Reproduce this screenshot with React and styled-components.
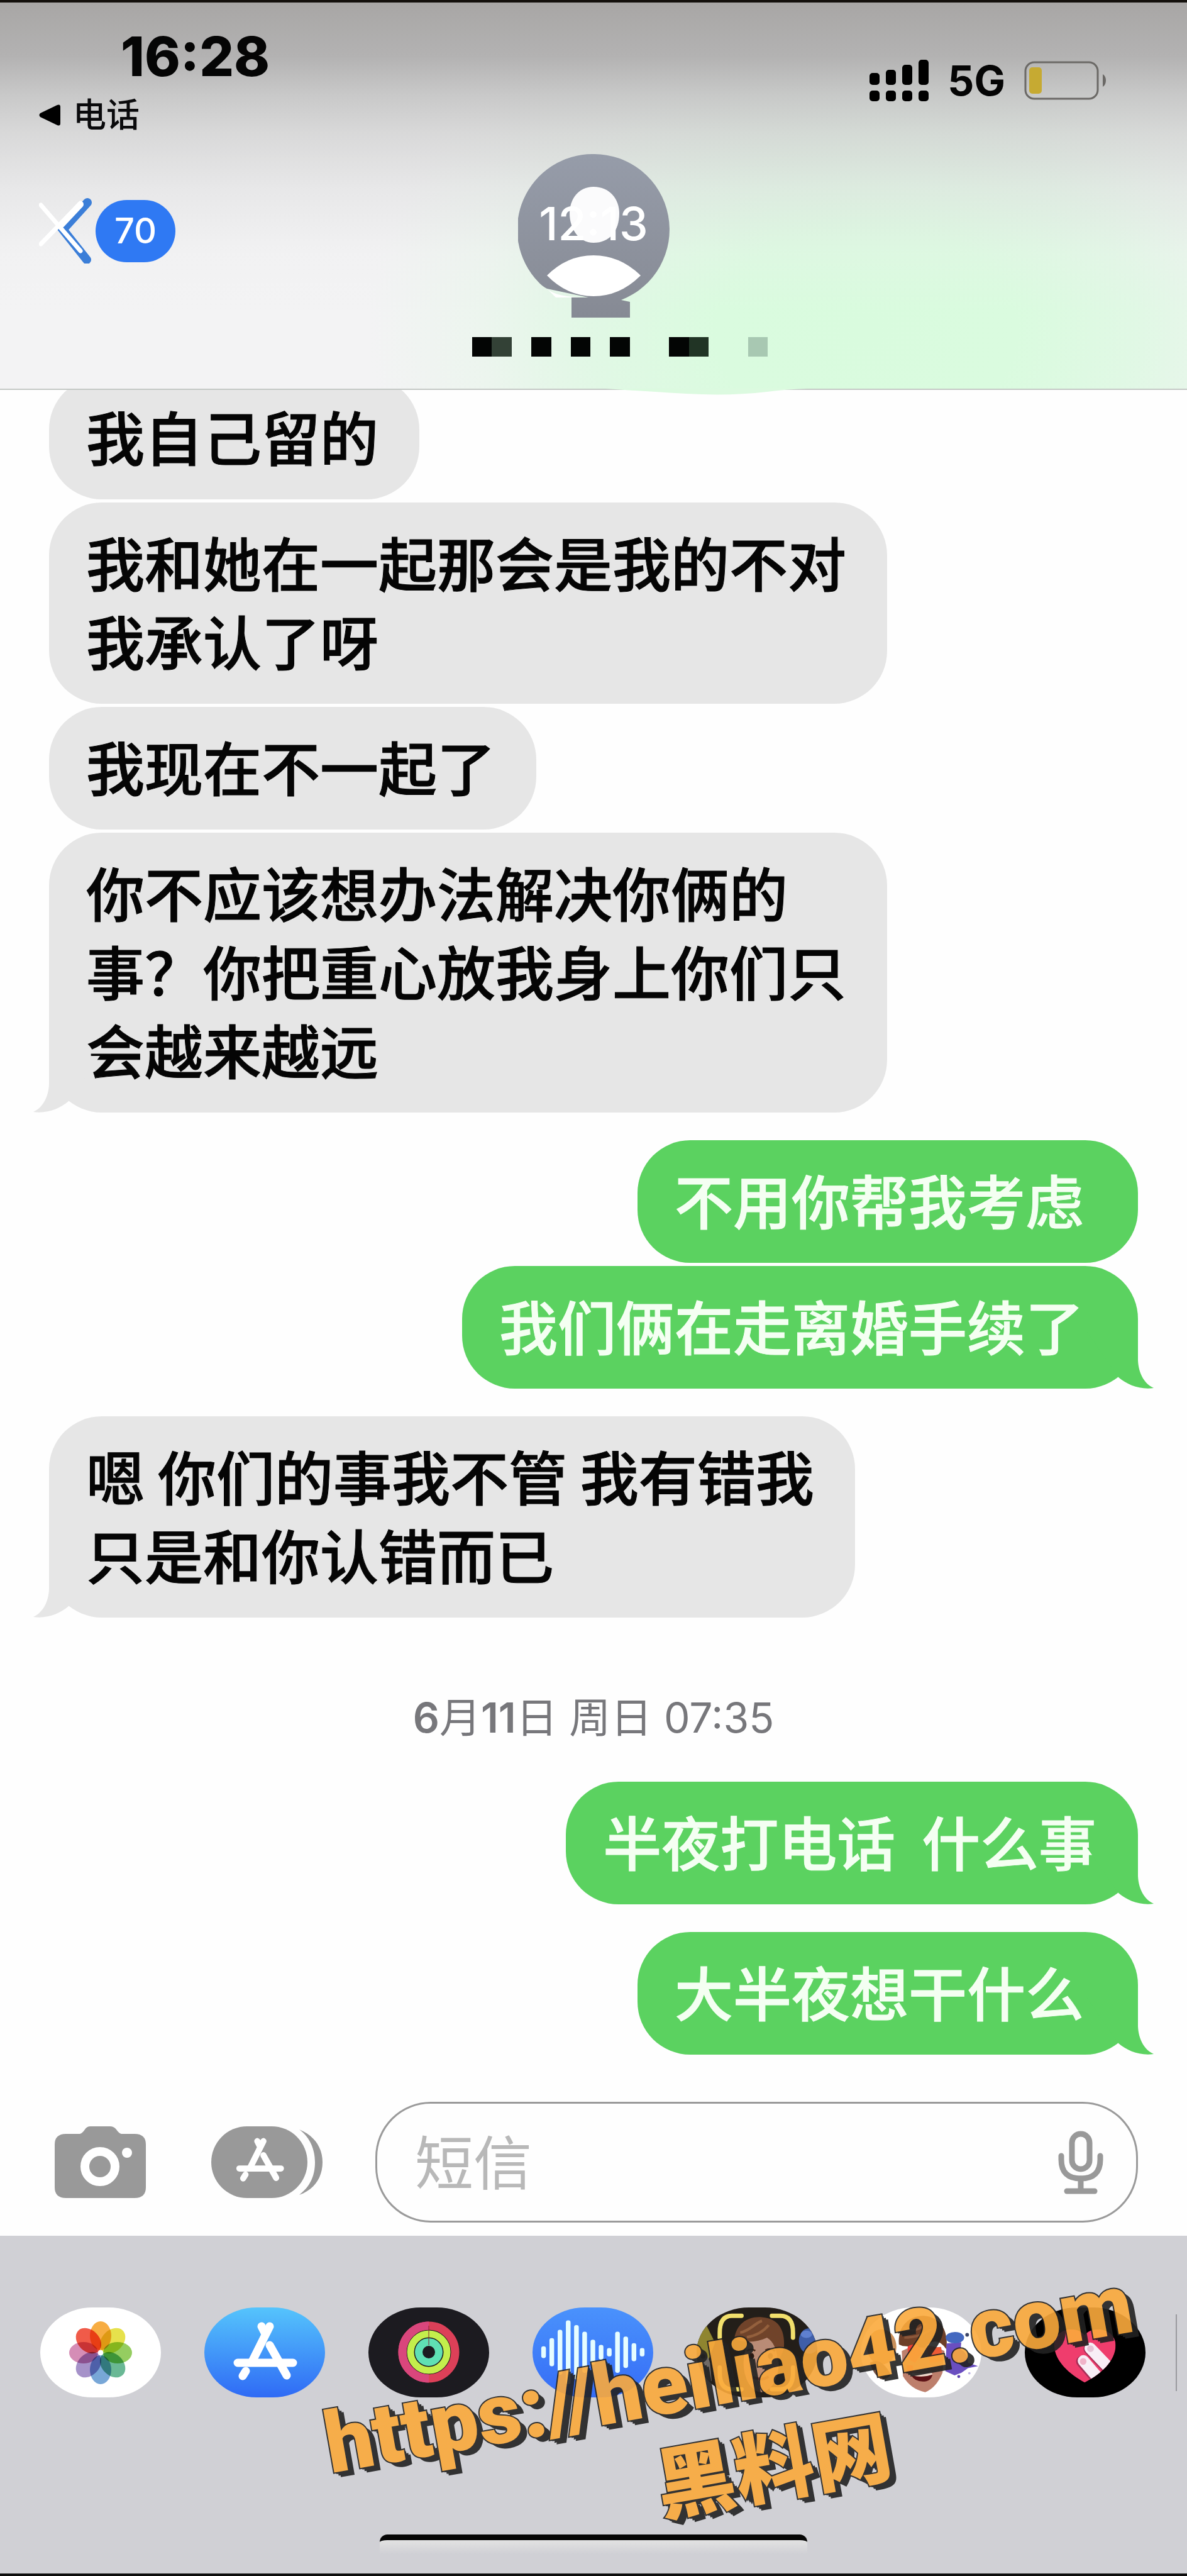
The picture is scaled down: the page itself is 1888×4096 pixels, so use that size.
import React from "react";
import styled, { createGlobalStyle } from "styled-components";

const groups = [
  {
    side: "in",
    messages: [
      "我自己留的",
      "我和她在一起那会是我的不对\n我承认了呀",
      "我现在不一起了",
      "你不应该想办法解决你俩的\n事？你把重心放我身上你们只\n会越来越远",
    ],
  },
  { side: "out", messages: ["不用你帮我考虑 ", "我们俩在走离婚手续了 "] },
  { side: "in", messages: ["嗯 你们的事我不管 我有错我\n只是和你认错而已"] },
];

const lateGroups = [
  { side: "out", messages: ["半夜打电话  什么事"] },
  { side: "out", messages: ["大半夜想干什么 "] },
];

const petals = [
  "#f6a229",
  "#e3dd33",
  "#86c64a",
  "#55ae86",
  "#659bd2",
  "#9a83c2",
  "#cf7dac",
  "#ee4430",
];

const waveBars = [35, 84, 134, 190, 162, 123, 75, 44, 25, 123, 94, 54, 25];

const Group = ({ side, messages }) => (
  <MessageGroup>
    {messages.map((text, index) => (
      <Bubble key={text} $side={side}>
        {text}
        {index === messages.length - 1 && (
          <Tail $side={side} viewBox="0 0 106 90" aria-hidden="true">
            <path d="M81 0V45C82 66 91 82 106 89C84 92 64 84 50 72L0 0Z" />
          </Tail>
        )}
      </Bubble>
    ))}
  </MessageGroup>
);

const StoreGlyph = () => (
  <g fill="none" stroke="#fff" strokeWidth="13" strokeLinecap="round">
    <path d="M104 30L76 86M66 101L61 109" />
    <path d="M91 30L97 42M104 60L131 108" />
    <path d="M53 88H141" />
  </g>
);

const PhotosIcon = () => (
  <svg viewBox="0 0 192 143">
    {petals.map((color, index) => (
      <ellipse
        key={color}
        cx="96"
        cy="45"
        rx="17"
        ry="23"
        fill={color}
        opacity="0.88"
        transform={`rotate(${index * 45} 96 72)`}
        style={{ mixBlendMode: "multiply" }}
      />
    ))}
    <circle cx="96" cy="72" r="4" fill="#fff" />
  </svg>
);

const StoreIcon = () => (
  <svg viewBox="0 0 192 143">
    <StoreGlyph />
  </svg>
);

const FitnessIcon = () => (
  <svg viewBox="0 0 192 143" fill="none">
    <circle cx="96" cy="71" r="42" stroke="#dc4058" strokeWidth="13" />
    <path d="M96 29A42 42 0 0 0 96 113" stroke="#d9467c" strokeWidth="13" />
    <circle cx="96" cy="71" r="29" stroke="#c3ee4c" strokeWidth="11" />
    <circle cx="96" cy="71" r="16" stroke="#5fe0b4" strokeWidth="12" />
    <path d="M96 29V49M96 49V60" stroke="#8a2230" strokeWidth="2" opacity="0.5" />
  </svg>
);

const AudioIcon = () => (
  <svg viewBox="0 0 720 538">
    {waveBars.map((half, index) => (
      <rect
        key={index}
        x={52 + index * 49}
        y={267 - half}
        width="28"
        height={half * 2}
        rx="13"
        fill="#e6fdff"
      />
    ))}
  </svg>
);

const MemojiCameraIcon = () => (
  <svg viewBox="0 0 720 538">
    <path d="M0 110H60L110 210L60 340H0Z" fill="#8f8530" />
    <path d="M0 270Q60 250 80 330L90 440L0 420Z" fill="#6f6a66" />
    <circle cx="38" cy="292" r="14" fill="#1c1a19" />
    <ellipse cx="672" cy="200" rx="62" ry="76" fill="#3f5ea8" />
    <ellipse cx="655" cy="160" rx="34" ry="22" fill="#5f80cf" />
    <ellipse cx="385" cy="330" rx="105" ry="175" fill="#b98b76" />
    <path d="M225 190C235 95 310 50 390 58C500 66 530 150 520 250L485 330C480 250 460 205 420 180C360 210 290 210 225 190Z" fill="#70432a" />
    <path d="M260 150C320 140 350 90 390 80M300 178C370 165 410 130 430 105" stroke="#94603d" strokeWidth="16" fill="none" />
    <path d="M300 260Q325 240 350 258M410 256Q440 238 468 260" stroke="#4a2818" strokeWidth="10" fill="none" />
    <ellipse cx="328" cy="290" rx="15" ry="18" fill="#2a1a14" />
    <ellipse cx="440" cy="290" rx="15" ry="18" fill="#2a1a14" />
    <path d="M335 415Q385 440 430 412" stroke="#7a2e2c" strokeWidth="16" fill="none" />
    <g fill="none" stroke="#f2df6c" strokeWidth="26" strokeLinecap="round">
      <path d="M138 180V150Q138 50 210 50H268" />
      <path d="M449 50H500Q575 50 575 150V180" />
      <path d="M138 358V388Q138 488 210 488H268" />
      <path d="M449 488H500Q575 488 575 388V358" />
    </g>
  </svg>
);

const MemojiIcon = () => (
  <svg viewBox="0 0 720 538">
    <ellipse cx="125" cy="235" rx="88" ry="105" fill="#c98f5a" />
    <path d="M55 330Q120 290 180 400Q160 430 120 428Q75 400 55 330Z" fill="#73503f" />
    <path d="M245 260Q370 190 500 260L488 390Q450 480 385 505Q300 490 252 410Z" fill="#bd7f6c" />
    <path d="M228 220C220 110 290 50 375 50C470 55 525 130 512 250Q450 160 380 240L250 230Z" fill="#6d3f28" />
    <path d="M250 120Q330 160 390 95M260 180Q350 180 420 130" stroke="#8c573a" strokeWidth="14" fill="none" />
    <path d="M280 235Q300 215 340 225L365 270L325 330L285 310Z" fill="#ee3f35" />
    <path d="M395 240L480 235L490 320L410 330Z" fill="#ee5a35" />
    <path d="M275 345H312V385H275Z" fill="#e8352e" />
    <path d="M302 405Q370 420 428 400Q420 442 370 442Q320 440 302 405Z" fill="#5c1115" />
    <path d="M302 405Q370 420 428 400L422 385Q365 400 308 390Z" fill="#f0d8cc" />
    <path d="M512 215L600 208L596 250Q640 270 640 330L700 350L640 362L600 390L560 405L505 380Z" fill="#6a4ec0" />
    <ellipse cx="562" cy="180" rx="55" ry="34" fill="#4468c0" />
    <circle cx="635" cy="163" r="11" fill="#3d4668" />
    <circle cx="585" cy="412" r="9" fill="#5d42b0" />
    <circle cx="648" cy="392" r="7" fill="#b9aee2" />
  </svg>
);

const HeartIcon = () => (
  <svg viewBox="0 0 720 538">
    <defs>
      <clipPath id="heart">
        <path d="M357 447C270 400 176 320 176 225C176 130 300 100 357 165C410 100 542 130 542 225C542 320 450 400 357 447Z" />
      </clipPath>
    </defs>
    <g clipPath="url(#heart)">
      <rect width="720" height="538" fill="#ef3d6d" />
      <g strokeWidth="68" strokeLinecap="round">
        <path d="M340 322L450 450" stroke="#a82f58" />
        <path d="M384 247L520 390" stroke="#a82f58" />
        <path d="M350 318L480 470" stroke="#f8eef6" />
        <path d="M390 243L540 400" stroke="#f8eef6" />
      </g>
      <circle cx="348" cy="322" r="20" fill="#f0b3c9" />
      <circle cx="392" cy="246" r="20" fill="#e5c4d6" />
    </g>
  </svg>
);

const apps = [
  { name: "照片", icon: <PhotosIcon />, background: "#fff" },
  {
    name: "App Store",
    icon: <StoreIcon />,
    background: "linear-gradient(#55c4fc, #2f6af5)",
  },
  { name: "健身", icon: <FitnessIcon />, background: "#1c1b20" },
  {
    name: "音频",
    icon: <AudioIcon />,
    background: "linear-gradient(#4a92fc, #356cf6)",
  },
  { name: "相机拟我表情", icon: <MemojiCameraIcon />, background: "#231e19" },
  { name: "拟我表情", icon: <MemojiIcon />, background: "#fff" },
  { name: "Digital Touch", icon: <HeartIcon />, background: "#000" },
];

const App = () => {
  return (
    <Page>
      <GlobalStyle />
      <Header>
        <StatusBar>
          <div>
            <Time>16:28</Time>
            <ReturnLink href="#phone">
              <svg width="34" height="34" viewBox="0 0 34 34" aria-hidden="true">
                <path d="M2 14Q-1 17 2 20L29 33Q34 35 34 30V4Q34-1 29 1Z" />
              </svg>
              电话
            </ReturnLink>
          </div>
          <StatusIcons>
            <svg width="94" height="66" viewBox="0 0 94 66" aria-hidden="true">
              <rect x="0" y="21" width="16" height="19" rx="5" />
              <rect x="26" y="16" width="16" height="24" rx="5" />
              <rect x="52" y="8" width="16" height="32" rx="5" />
              <rect x="78" y="0" width="16" height="40" rx="5" />
              <rect x="0" y="49" width="16" height="17" rx="5" />
              <rect x="26" y="49" width="16" height="17" rx="5" />
              <rect x="52" y="49" width="16" height="17" rx="5" />
              <rect x="78" y="49" width="16" height="17" rx="5" />
            </svg>
            <span>5G</span>
            <svg width="131" height="62" viewBox="0 0 131 62" aria-hidden="true">
              <rect x="2" y="2" width="115" height="58" rx="14" fill="none" stroke="#6b6966" strokeWidth="3" />
              <rect x="8" y="10" width="20" height="42" rx="5" fill="#c6aa32" />
              <path d="M125 21Q130 24 130 31Q130 38 125 41Z" fill="#6b6966" />
            </svg>
          </StatusIcons>
        </StatusBar>
        <NavBar>
          <BackButton type="button" aria-label="返回">
            <svg width="84" height="104" viewBox="0 0 84 104" fill="none" strokeLinecap="round" aria-hidden="true">
              <path d="M77 7L38 50L76 98" stroke="#3b7ed8" strokeWidth="14" />
              <path d="M66 8L3 73M3 11L66 84" stroke="#fff" strokeWidth="7" />
              <path d="M66 10L36 42" stroke="#fff" strokeWidth="10" />
            </svg>
            <Unread>70</Unread>
          </BackButton>
          <Contact>
            <svg width="241" height="262" viewBox="0 0 241 262">
              <defs>
                <linearGradient id="avatar" x1="0" y1="0" x2="0" y2="1">
                  <stop offset="0" stopColor="#969ca9" />
                  <stop offset="1" stopColor="#868a94" />
                </linearGradient>
              </defs>
              <path d="M46 214Q60 228 112 228L60 228Z" fill="#fff" />
              <path d="M120 0A120 120 0 0 1 164 232L178 235V260H85V228H112L46 214Q38 210 32 203A120 120 0 0 1 120 0Z" fill="url(#avatar)" />
              <path d="M120 52C146 52 161 72 161 94C161 122 146 141 120 141C96 141 82 118 82 94C82 72 96 52 120 52Z" fill="#fbfbfc" />
              <path d="M46 193Q78 161 120 161Q162 161 195 193Q162 226 120 226Q78 226 46 193Z" fill="#fff" />
              <AvatarText x="120" y="137" textAnchor="middle">
                12:13
              </AvatarText>
            </svg>
            <svg width="554" height="31" viewBox="-84 0 554 31" aria-hidden="true">
              <path d="M0 0H31V31H0ZM94 0H126V31H94ZM157 0H188V31H157ZM219 0H251V31H219ZM313 0H345V31H313Z" fill="#030504" />
              <path d="M31 0H63V31H31Z" fill="#334136" />
              <path d="M345 0H376V31H345Z" fill="#213425" />
              <path d="M439 0H470V31H439Z" fill="#a8c8b2" />
            </svg>
          </Contact>
        </NavBar>
        <Bulge viewBox="0 0 325 11" preserveAspectRatio="none" aria-hidden="true">
          <path d="M0 0Q80 5 130 8Q200 12 260 5Q290 1 325 0Z" />
        </Bulge>
      </Header>

      <Conversation>
        {groups.map((group) => (
          <Group key={group.messages[0]} {...group} />
        ))}
        <Timestamp>
          <b>6</b>月<b>11</b>日 周日 07:35
        </Timestamp>
        {lateGroups.map((group) => (
          <Group key={group.messages[0]} {...group} />
        ))}
      </Conversation>

      <Compose>
        <IconButton type="button" aria-label="相机">
          <svg width="145" height="114" viewBox="0 0 145 114">
            <path d="M18 12H40Q44 11 48 5Q51 0 57 0H88Q94 0 98 5Q102 11 106 12H127Q145 12 145 29V97Q145 114 127 114H18Q0 114 0 97V29Q0 12 18 12Z" fill="#999" />
            <circle cx="72" cy="64" r="24" fill="none" stroke="#fff" strokeWidth="14" />
            <circle cx="115" cy="42" r="8" fill="#fff" />
          </svg>
        </IconButton>
        <IconButton type="button" aria-label="App">
          <svg width="177" height="114" viewBox="0 0 177 114">
            <rect width="153" height="114" rx="57" fill="#999" />
            <path d="M140 5C165 15 177 35 177 57C177 80 165 100 140 109C158 95 165 78 165 57C165 38 158 18 140 5Z" fill="#999" />
            <g transform="translate(5 1) scale(.75)">
              <StoreGlyph />
            </g>
          </svg>
        </IconButton>
        <Field>
          <Input type="text" placeholder="短信" aria-label="短信" />
          <IconButton type="button" aria-label="听写">
            <svg width="72" height="101" viewBox="0 0 72 101" fill="none" stroke="#999" strokeWidth="9" strokeLinecap="round">
              <rect x="22" y="5" width="28" height="56" rx="14" />
              <path d="M5 40V46Q5 76 36 76Q67 76 67 46V40" />
              <path d="M36 76V94" />
              <path d="M14 96H58" />
            </svg>
          </IconButton>
        </Field>
      </Compose>

      <Tray>
        <AppRow>
          {apps.map((app) => (
            <AppButton key={app.name} type="button" aria-label={app.name} $background={app.background}>
              {app.icon}
            </AppButton>
          ))}
          <Divider />
        </AppRow>
        <HomeIndicator />
        <Watermark>
          <span>https://heiliao42.com</span>
          <SiteName>黑料网</SiteName>
        </Watermark>
      </Tray>
    </Page>
  );
};

const GlobalStyle = createGlobalStyle`
  body {
    margin: 0;
    background-color: #fefefe;
  }
  * {
    box-sizing: border-box;
  }
  svg {
    display: block;
    flex: none;
  }
  button {
    border: none;
    padding: 0;
    background: none;
    cursor: pointer;
  }
`;

const Page = styled.div`
  min-height: 100vh;
  display: flex;
  flex-direction: column;
  overflow: hidden;
  color: #050505;
  font-family: Inter, "Noto Sans CJK SC", sans-serif;
`;

const Header = styled.header`
  position: relative;
  z-index: 1;
  border-top: 4px solid #14100c;
  border-bottom: 2px solid #c4c8c5;
  padding-bottom: 51px;
  background:
    linear-gradient(
      rgba(168, 166, 165, 1) 0%,
      rgba(178, 177, 177, 0.98) 14%,
      rgba(196, 196, 196, 0.9) 24%,
      rgba(208, 208, 208, 0.75) 34%,
      rgba(220, 220, 221, 0.5) 48%,
      rgba(235, 235, 236, 0.2) 65%,
      rgba(244, 244, 245, 0) 80%
    ),
    radial-gradient(
      ellipse 42% 95% at 73% 85%,
      #d9fbde 0%,
      #dafbdf 30%,
      rgba(220, 249, 225, 0.8) 55%,
      rgba(228, 247, 231, 0.45) 78%,
      rgba(243, 243, 244, 0) 100%
    ),
    #f3f3f4;
`;

const StatusBar = styled.div`
  display: flex;
  justify-content: space-between;
  padding: 32px 128px 0 62px;
`;

const Time = styled.div`
  padding-left: 130px;
  font-size: 86px;
  font-weight: 800;
  line-height: 108px;
`;

const ReturnLink = styled.a`
  display: flex;
  align-items: center;
  gap: 20px;
  color: #0a0a0c;
  font-size: 53px;
  font-weight: 500;
  line-height: 78px;
  text-decoration: none;
`;

const StatusIcons = styled.div`
  display: flex;
  align-items: center;
  gap: 30px;
  height: 78px;
  margin-top: 53px;
  font-size: 66px;
  font-weight: 700;
`;

const NavBar = styled.nav`
  display: grid;
  grid-template-columns: 1fr auto 1fr;
  align-items: start;
  padding: 23px 62px 0;
`;

const BackButton = styled.button`
  display: flex;
  align-items: center;
  gap: 6px;
  justify-self: start;
  margin-top: 70px;
`;

const Unread = styled.span`
  padding: 0 30px;
  border-radius: 50px;
  background-color: #2f79f3;
  color: #fff;
  font-family: Inter, sans-serif;
  font-size: 56px;
  font-weight: 500;
  line-height: 99px;
`;

const Contact = styled.div`
  display: flex;
  flex-direction: column;
  align-items: center;
  gap: 29px;
`;

const AvatarText = styled.text`
  fill: #fff;
  font-size: 73px;
  font-weight: 500;
`;

const Bulge = styled.svg`
  position: absolute;
  top: 100%;
  left: 51%;
  width: 17%;
  height: 11px;
  fill: #dcfae0;
`;

const Conversation = styled.main`
  flex: 1;
  display: flex;
  flex-direction: column;
  gap: 44px;
  margin-top: -21px;
  padding: 0 78px;
`;

const MessageGroup = styled.section`
  display: flex;
  flex-direction: column;
  gap: 5px;
`;

const Bubble = styled.div`
  position: relative;
  align-self: ${({ $side }) => ($side === "out" ? "flex-end" : "flex-start")};
  padding: 31px 65px 39px 59px;
  border-radius: 84px;
  background-color: ${({ $side }) => ($side === "out" ? "#5bd260" : "#e6e6e6")};
  color: ${({ $side }) => ($side === "out" ? "#f4fff2" : "#050505")};
  font-family: "Noto Sans CJK SC", sans-serif;
  font-size: 93px;
  font-weight: 500;
  line-height: 125px;
  white-space: pre;
  -webkit-text-stroke: 1px;
`;

const Tail = styled.svg`
  position: absolute;
  bottom: 0;
  width: 106px;
  height: 90px;
  ${({ $side }) =>
    $side === "out"
      ? "right: -25px; fill: #5bd260;"
      : "left: -25px; fill: #e6e6e6; transform: scaleX(-1);"}
`;

const Timestamp = styled.time`
  padding: 75px 0 18px;
  color: #77777b;
  font-size: 66px;
  line-height: 80px;
  text-align: center;
  b {
    font-weight: 600;
  }
`;

const Compose = styled.div`
  display: flex;
  align-items: center;
  padding: 75px 78px 21px 87px;
`;

const IconButton = styled.button`
  flex: none;
  &:first-child {
    margin-right: 104px;
  }
`;

const Field = styled.div`
  flex: 1;
  display: flex;
  align-items: center;
  min-width: 0;
  height: 192px;
  margin-left: 84px;
  padding: 0 52px 0 60px;
  border: 3px solid #9a9a9a;
  border-radius: 88px;
`;

const Input = styled.input`
  flex: 1;
  min-width: 0;
  border: none;
  outline: none;
  padding: 0 0 10px;
  background: transparent;
  font-family: "Noto Sans CJK SC", sans-serif;
  font-size: 93px;
  &::placeholder {
    color: #b8b8b8;
    opacity: 1;
  }
`;

const Tray = styled.footer`
  position: relative;
  border-bottom: 4px solid #0c0c0c;
  padding: 114px 0 31px;
  background-color: #d0d0d5;
`;

const AppRow = styled.div`
  display: flex;
  align-items: center;
  gap: 69px;
  padding-left: 64px;
`;

const AppButton = styled.button`
  flex: none;
  width: 192px;
  height: 143px;
  border-radius: 84px / 72px;
  overflow: hidden;
  background: ${({ $background }) => $background};
`;

const Divider = styled.span`
  width: 2px;
  height: 122px;
  margin-left: -21px;
  background-color: #9a9a9f;
`;

const HomeIndicator = styled.div`
  width: 36%;
  height: 31px;
  margin: 218px auto 0;
  border-top: 9px solid #050505;
  border-radius: 12px 12px 0 0;
  background: linear-gradient(#e2e2e2, #d0d0d5);
`;

const Watermark = styled.div`
  position: absolute;
  top: 138px;
  left: 522px;
  display: flex;
  flex-direction: column;
  align-items: center;
  color: #fbaa3c;
  font-family: Roboto, "Noto Sans CJK SC", sans-serif;
  font-size: 135px;
  font-weight: 900;
  line-height: 160px;
  white-space: nowrap;
  opacity: 0.9;
  transform: rotate(-10deg);
  pointer-events: none;
  paint-order: stroke fill;
  -webkit-text-stroke: 4px #222;
  text-shadow: 3px 3px #222, 6px 6px #222, 9px 9px #222;
`;

const SiteName = styled.span`
  padding-left: 90px;
  font-size: 126px;
`;

export default App;
